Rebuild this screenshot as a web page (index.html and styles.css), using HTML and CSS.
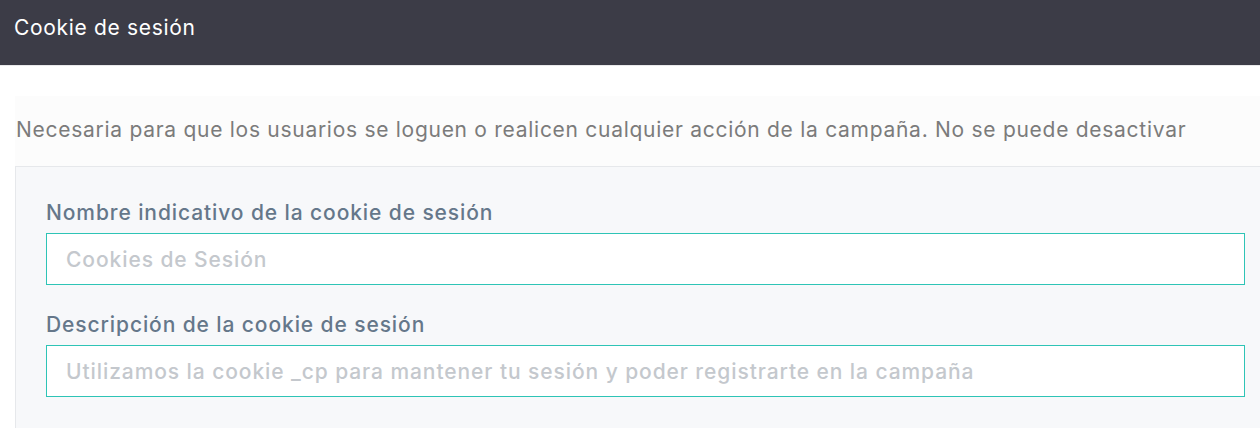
FILE: index.html
```html
<!DOCTYPE html>
<html lang="es">
<head>
<meta charset="utf-8">
<title>Cookie de sesión</title>
<link rel="stylesheet" href="styles.css">
</head>
<body>
<header class="topbar">
  <h1 class="topbar-title">Cookie de sesión</h1>
</header>
<main class="content">
  <p class="intro">Necesaria para que los usuarios se loguen o realicen cualquier acción de la campaña. No se puede desactivar</p>
  <section class="panel">
    <div class="field">
      <label class="field-label" for="name">Nombre indicativo de la cookie de sesión</label>
      <input class="field-input" id="name" type="text" placeholder="Cookies de Sesión">
    </div>
    <div class="field">
      <label class="field-label" for="desc">Descripción de la cookie de sesión</label>
      <input class="field-input" id="desc" type="text" placeholder="Utilizamos la cookie _cp para mantener tu sesión y poder registrarte en la campaña">
    </div>
  </section>
</main>
</body>
</html>
```
FILE: styles.css
```css
html, body {
  margin: 0;
  padding: 0;
  background: #ffffff;
  font-family: Inter, "Open Sans", "Liberation Sans", sans-serif;
  overflow: hidden;
}

.topbar {
  height: 65px;
  background: #3c3c47;
  border-bottom: 1px solid #e9e9eb;
  display: flex;
  align-items: flex-start;
  padding-left: 14px;
}

.topbar-title {
  margin: 0;
  margin-top: 14px;
  font-size: 21px;
  line-height: 28px;
  font-weight: 400;
  letter-spacing: 0.68px;
  color: #ffffff;
}

.content {
  padding: 30px 0 0 15px;
}

.intro {
  margin: 0;
  height: 70px;
  box-sizing: border-box;
  padding: 20px 0 0 1px;
  background: #fcfcfc;
  font-size: 21px;
  line-height: 28px;
  letter-spacing: 0.72px;
  color: #7b7b7b;
}

.panel {
  background: #f7f8fa;
  border-top: 1px solid #e6e8eb;
  border-left: 1px solid #e6e8eb;
  padding: 34px 15px 40px 30px;
}

.field + .field {
  margin-top: 28px;
}

.field-label {
  display: block;
  font-size: 21px;
  line-height: 24px;
  font-weight: 500;
  letter-spacing: 0.9px;
  color: #65778a;
  margin-bottom: 8px;
}

.field-input {
  display: block;
  width: 100%;
  box-sizing: border-box;
  height: 52px;
  border: 1px solid #2ec4b6;
  border-radius: 0;
  background: #ffffff;
  padding: 0 19px;
  font-family: inherit;
  font-size: 21px;
  font-weight: 500;
  letter-spacing: 0.92px;
  color: #4a4a4a;
  outline: none;
}

.field-input::placeholder {
  color: #c4c8cd;
  opacity: 1;
}
```
